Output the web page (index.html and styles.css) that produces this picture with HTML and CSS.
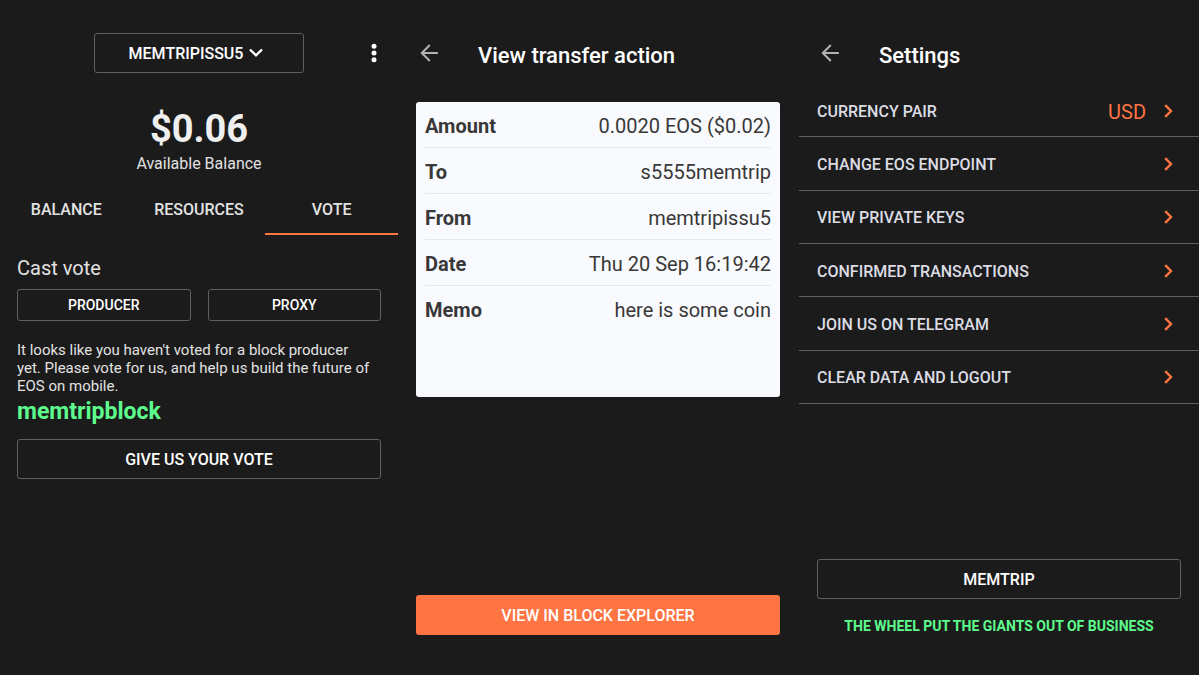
FILE: index.html
```html
<!DOCTYPE html>
<html lang="en">
<head>
<meta charset="utf-8">
<meta name="viewport" content="width=device-width, initial-scale=1">
<title>EOS Wallet</title>
<link rel="stylesheet" href="styles.css">
</head>
<body>
<main class="screens">
  <section class="screen wallet" aria-label="Wallet">
    <header class="wallet-bar">
      <button class="button account" type="button">MEMTRIPISSU5
        <svg class="account-arrow" viewBox="0 0 14 10" aria-hidden="true"><path d="M1 1.500 7 7.300l6-5.800"/></svg>
      </button>
      <button class="icon-button more" type="button" aria-label="More options">
        <svg class="more-icon" viewBox="0 0 6 20" aria-hidden="true"><circle cx="3" cy="3.200" r="2.500"/><circle cx="3" cy="10" r="2.500"/><circle cx="3" cy="16.800" r="2.500"/></svg>
      </button>
    </header>
    <div class="balance">
      <p class="balance-value">$0.06</p>
      <p class="balance-label">Available Balance</p>
    </div>
    <nav class="tabs">
      <a class="tab" href="#balance">BALANCE</a>
      <a class="tab" href="#resources">RESOURCES</a>
      <a class="tab tab-active" href="#vote" aria-current="page">VOTE</a>
    </nav>
    <div class="vote">
      <h2 class="vote-title">Cast vote</h2>
      <div class="vote-types">
        <button class="button small" type="button">PRODUCER</button>
        <button class="button small" type="button">PROXY</button>
      </div>
      <p class="vote-text">It looks like you haven't voted for a block producer<br>yet. Please vote for us, and help us build the future of<br>EOS on mobile.</p>
      <p class="producer">memtripblock</p>
      <button class="button" type="button">GIVE US YOUR VOTE</button>
    </div>
  </section>

  <section class="screen transfer" aria-label="Transfer">
    <header class="title-bar">
      <button class="icon-button" type="button" aria-label="Back">
        <svg class="back-icon" viewBox="0 0 18 18" aria-hidden="true"><path d="M17.800 9H1.800M9.800 1 1.800 9l8 8"/></svg>
      </button>
      <h1 class="title">View transfer action</h1>
    </header>
    <dl class="card">
      <div class="detail"><dt>Amount</dt><dd>0.0020 EOS ($0.02)</dd></div>
      <div class="detail"><dt>To</dt><dd>s5555memtrip</dd></div>
      <div class="detail"><dt>From</dt><dd>memtripissu5</dd></div>
      <div class="detail"><dt>Date</dt><dd>Thu 20 Sep 16:19:42</dd></div>
      <div class="detail"><dt>Memo</dt><dd>here is some coin</dd></div>
    </dl>
    <footer class="transfer-footer">
      <button class="button primary" type="button">VIEW IN BLOCK EXPLORER</button>
    </footer>
  </section>

  <section class="screen settings" aria-label="Settings">
    <header class="title-bar">
      <button class="icon-button" type="button" aria-label="Back">
        <svg class="back-icon" viewBox="0 0 18 18" aria-hidden="true"><path d="M17.800 9H1.800M9.800 1 1.800 9l8 8"/></svg>
      </button>
      <h1 class="title">Settings</h1>
    </header>
    <nav class="options">
      <a class="option" href="#currency"><span>CURRENCY PAIR</span><span class="option-value">USD</span><svg class="chevron" viewBox="0 0 9 14" aria-hidden="true"><path d="m1.200 1.200 5.800 5.800-5.800 5.800"/></svg></a>
      <a class="option" href="#endpoint"><span>CHANGE EOS ENDPOINT</span><svg class="chevron" viewBox="0 0 9 14" aria-hidden="true"><path d="m1.200 1.200 5.800 5.800-5.800 5.800"/></svg></a>
      <a class="option" href="#keys"><span>VIEW PRIVATE KEYS</span><svg class="chevron" viewBox="0 0 9 14" aria-hidden="true"><path d="m1.200 1.200 5.800 5.800-5.800 5.800"/></svg></a>
      <a class="option" href="#transactions"><span>CONFIRMED TRANSACTIONS</span><svg class="chevron" viewBox="0 0 9 14" aria-hidden="true"><path d="m1.200 1.200 5.800 5.800-5.800 5.800"/></svg></a>
      <a class="option" href="#telegram"><span>JOIN US ON TELEGRAM</span><svg class="chevron" viewBox="0 0 9 14" aria-hidden="true"><path d="m1.200 1.200 5.800 5.800-5.800 5.800"/></svg></a>
      <a class="option" href="#logout"><span>CLEAR DATA AND LOGOUT</span><svg class="chevron" viewBox="0 0 9 14" aria-hidden="true"><path d="m1.200 1.200 5.800 5.800-5.800 5.800"/></svg></a>
    </nav>
    <footer class="settings-footer">
      <button class="button" type="button">MEMTRIP</button>
      <p class="motto">THE WHEEL PUT THE GIANTS OUT OF BUSINESS</p>
    </footer>
  </section>
</main>
</body>
</html>
```
FILE: styles.css
```css
:root {
  --bg: #1b1b1b;
  --line: #5f5f5f;
  --orange: #ff7443;
  --green: #5efc8d;
}

* {
  box-sizing: border-box;
}

body {
  margin: 0;
  background: var(--bg);
  color: #e2e2e2;
  font: 16px/18px Roboto, "Liberation Sans", sans-serif;
}

h1, h2, p, dl, dd {
  margin: 0;
}

a {
  color: inherit;
  text-decoration: none;
}

svg {
  display: block;
  fill: none;
  stroke: currentColor;
  stroke-width: 2;
}

.screens {
  display: grid;
  grid-template-columns: 398fr 401fr 400fr;
  min-height: 100vh;
}

.screen {
  display: flex;
  flex-direction: column;
  min-width: 0;
}

.button {
  display: flex;
  align-items: center;
  justify-content: center;
  width: 100%;
  height: 40px;
  padding: 2px 0 0;
  border: 1px solid var(--line);
  border-radius: 3px;
  background: transparent;
  color: #fff;
  font: 500 16px/20px Roboto, "Liberation Sans", sans-serif;
  cursor: pointer;
}

.small {
  height: 32px;
  padding: 0;
  font-size: 14px;
}

.primary {
  border: 0;
  background: var(--orange);
}

.icon-button {
  padding: 0;
  border: 0;
  background: none;
  color: #b4b4b4;
  cursor: pointer;
}

/* Wallet */

.wallet-bar {
  display: grid;
  grid-template-columns: 1fr 210px 1fr;
  align-items: center;
  padding-top: 33px;
}

.account {
  grid-column: 2;
  gap: 6px;
  padding-right: 6px;
}

.account-arrow {
  width: 14px;
  height: 10px;
  margin-bottom: 2px;
  stroke-width: 2.4;
}

.more {
  justify-self: end;
  margin-right: 21px;
  color: #fff;
}

.more-icon {
  width: 6px;
  height: 20px;
  fill: currentColor;
  stroke: none;
}

.balance {
  padding-top: 32px;
  text-align: center;
}

.balance-value {
  color: #efefef;
  font-size: 38px;
  font-weight: 700;
  line-height: 48px;
}

.balance-label {
  padding-top: 1px;
  line-height: 20px;
}

.tabs {
  display: grid;
  grid-template-columns: repeat(3, 1fr);
  padding-top: 11px;
}

.tab {
  height: 50px;
  border-bottom: 2px solid transparent;
  font-weight: 500;
  line-height: 50px;
  text-align: center;
}

.tab-active {
  border-color: var(--orange);
}

.vote {
  padding: 20px 17px;
}

.vote-title {
  font-size: 20px;
  font-weight: 400;
  line-height: 26px;
}

.vote-types {
  display: grid;
  grid-template-columns: 1fr 1fr;
  gap: 17px;
  padding: 8px 0 20px;
}

.vote-text {
  font-size: 15px;
}

.producer {
  padding: 4px 0 14px;
  color: var(--green);
  font-size: 23px;
  font-weight: 700;
  line-height: 26px;
}

/* Title bar shared by the inner screens */

.title-bar {
  display: flex;
  align-items: center;
  gap: 40px;
  padding: 34px 22px 12px;
}

.back-icon {
  width: 18px;
  height: 18px;
}

.title {
  padding-top: 6px;
  color: #fff;
  font-size: 22px;
  font-weight: 500;
  line-height: 32px;
}

/* Transfer */

.card {
  min-height: 295px;
  margin: 18px 19px 0 18px;
  padding: 0 9px;
  border-radius: 3px;
  background: #f9fafd;
  color: #383838;
  font-size: 20px;
  line-height: 24px;
}

.detail {
  display: flex;
  justify-content: space-between;
  height: 46px;
  padding-top: 12px;
  border-bottom: 1px solid #e6e8ec;
}

.detail:last-child {
  border-bottom: 0;
}

.detail dt {
  font-weight: 700;
}

.transfer-footer {
  margin-top: auto;
  padding: 20px 19px 40px 18px;
}

/* Settings */

.options {
  display: grid;
  grid-auto-rows: 1fr;
  height: 320px;
}

.option {
  display: flex;
  align-items: center;
  padding: 3px 26px 0 18px;
  border-bottom: 1px solid var(--line);
  color: #dcdce4;
  font-weight: 500;
}

.option-value {
  margin-left: auto;
  color: var(--orange);
  font-size: 20px;
  font-weight: 400;
}

.chevron {
  width: 9px;
  height: 14px;
  margin-bottom: 2px;
  margin-left: auto;
  color: var(--orange);
  stroke-width: 2.4;
}

.option-value + .chevron {
  margin-left: 18px;
}

.settings-footer {
  margin-top: auto;
  padding: 20px 18px 40px;
}

.motto {
  padding-top: 18px;
  color: var(--green);
  font-size: 14px;
  font-weight: 700;
  text-align: center;
}
```
